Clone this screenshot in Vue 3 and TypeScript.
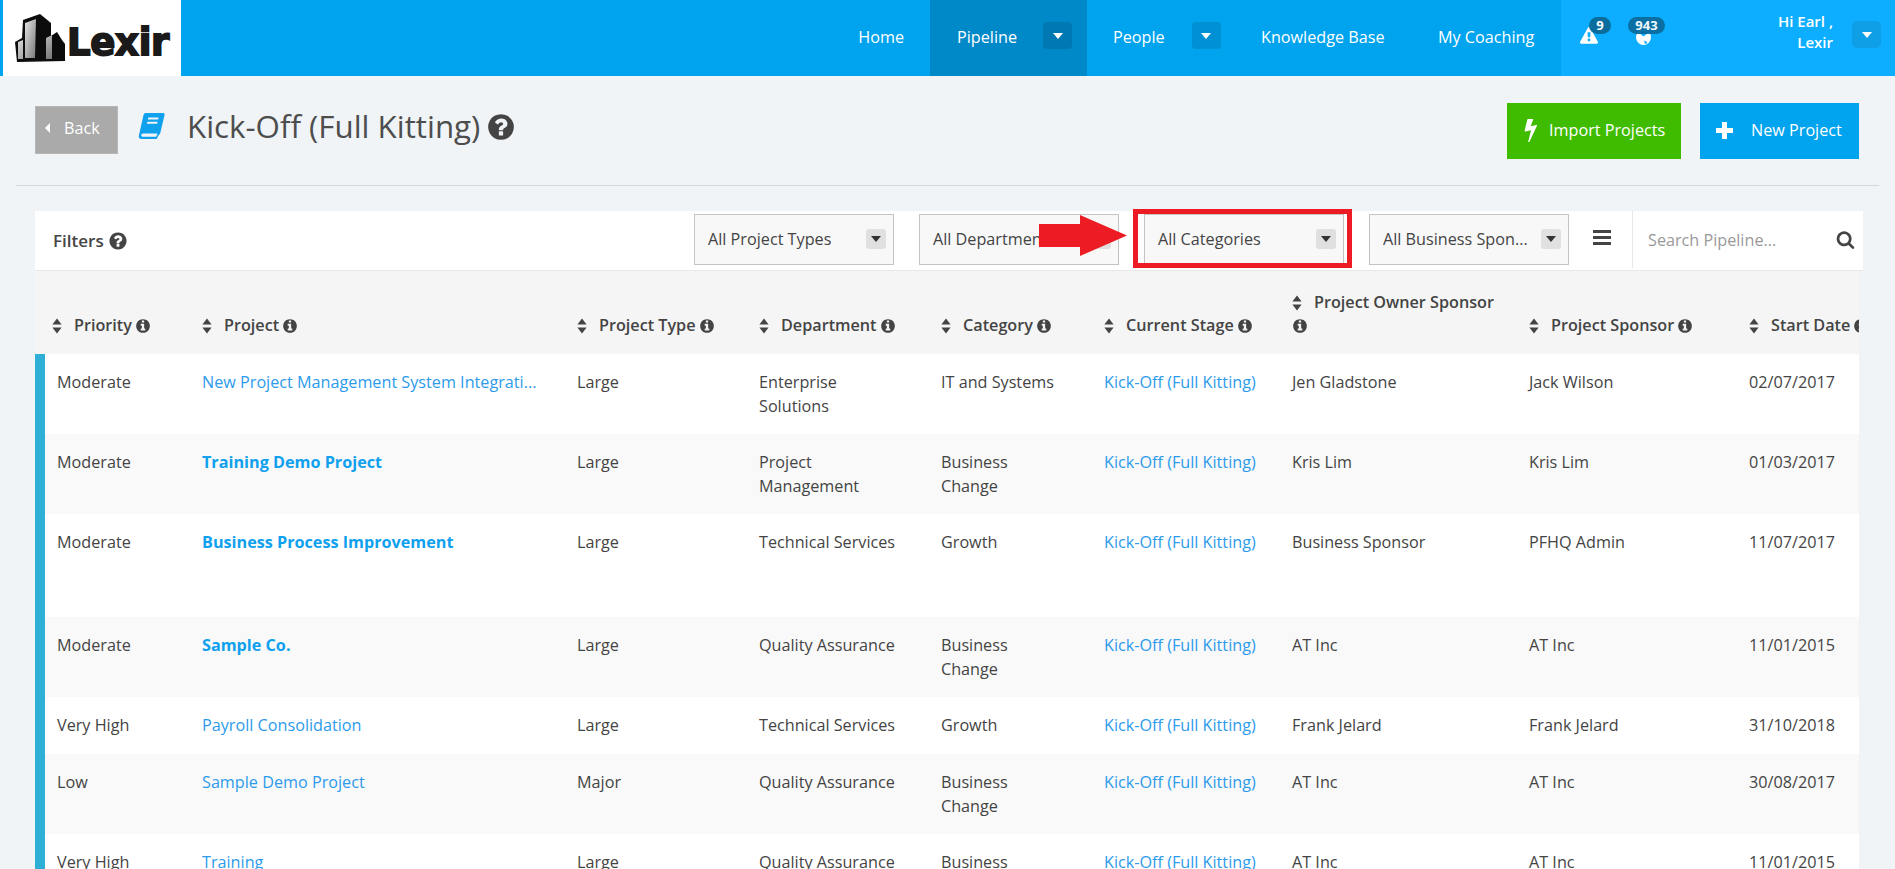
<script setup lang="ts">
interface Row {
  priority: string
  project: string
  bold?: boolean
  type: string
  dept: string
  category: string
  owner: string
  sponsor: string
  date: string
  size: 'tall' | 'short' | 'xtall'
}

const navLinks = [
  { label: 'Home', cls: 'home' },
  { label: 'Pipeline', cls: 'pipeline', caret: true },
  { label: 'People', cls: 'people', caret: true },
  { label: 'Knowledge Base', cls: 'kb' },
  { label: 'My Coaching', cls: 'coach' },
]

const selects = [
  { label: 'All Project Types', cls: 's1' },
  { label: 'All Departments', cls: 's2' },
  { label: 'All Categories', cls: 's3' },
  { label: 'All Business Spon...', cls: 's4' },
]

const columns = [
  { label: 'Priority', w: 155 },
  { label: 'Project', w: 375 },
  { label: 'Project Type', w: 182 },
  { label: 'Department', w: 182 },
  { label: 'Category', w: 163 },
  { label: 'Current Stage', w: 188 },
  { label: 'Project Owner Sponsor', w: 237 },
  { label: 'Project Sponsor', w: 220 },
  { label: 'Start Date', w: 200 },
]

const rows: Row[] = [
  { priority: 'Moderate', project: 'New Project Management System Integrati...', type: 'Large', dept: 'Enterprise Solutions', category: 'IT and Systems', owner: 'Jen Gladstone', sponsor: 'Jack Wilson', date: '02/07/2017', size: 'tall' },
  { priority: 'Moderate', project: 'Training Demo Project', bold: true, type: 'Large', dept: 'Project Management', category: 'Business Change', owner: 'Kris Lim', sponsor: 'Kris Lim', date: '01/03/2017', size: 'tall' },
  { priority: 'Moderate', project: 'Business Process Improvement', bold: true, type: 'Large', dept: 'Technical Services', category: 'Growth', owner: 'Business Sponsor', sponsor: 'PFHQ Admin', date: '11/07/2017', size: 'xtall' },
  { priority: 'Moderate', project: 'Sample Co.', bold: true, type: 'Large', dept: 'Quality Assurance', category: 'Business Change', owner: 'AT Inc', sponsor: 'AT Inc', date: '11/01/2015', size: 'tall' },
  { priority: 'Very High', project: 'Payroll Consolidation', type: 'Large', dept: 'Technical Services', category: 'Growth', owner: 'Frank Jelard', sponsor: 'Frank Jelard', date: '31/10/2018', size: 'short' },
  { priority: 'Low', project: 'Sample Demo Project', type: 'Major', dept: 'Quality Assurance', category: 'Business Change', owner: 'AT Inc', sponsor: 'AT Inc', date: '30/08/2017', size: 'tall' },
  { priority: 'Very High', project: 'Training', type: 'Large', dept: 'Quality Assurance', category: 'Business Change', owner: 'AT Inc', sponsor: 'AT Inc', date: '11/01/2015', size: 'tall' },
]
</script>

<template>
  <div class="app">
    <svg class="sprite" aria-hidden="true">
      <symbol id="i-info" viewBox="0 0 1792 1792">
        <path d="M1152 1376v-160q0-14-9-23t-23-9h-96v-512q0-14-9-23t-23-9h-320q-14 0-23 9t-9 23v160q0 14 9 23t23 9h96v320h-96q-14 0-23 9t-9 23v160q0 14 9 23t23 9h448q14 0 23-9t9-23zm-128-896v-160q0-14-9-23t-23-9h-192q-14 0-23 9t-9 23v160q0 14 9 23t23 9h192q14 0 23-9t9-23zm640 416q0 209-103 385.5t-279.5 279.5-385.5 103-385.5-103-279.5-279.5-103-385.5 103-385.5 279.5-279.5 385.5-103 385.5 103 279.5 279.5 103 385.5z" />
      </symbol>
      <symbol id="i-question" viewBox="0 0 1792 1792">
        <path d="M1024 1376v-192q0-14-9-23t-23-9h-192q-14 0-23 9t-9 23v192q0 14 9 23t23 9h192q14 0 23-9t9-23zm256-672q0-88-55.5-163t-138.5-116-170-41q-243 0-371 213-15 24 8 42l132 100q7 6 19 6 16 0 25-12 53-68 86-92 34-24 86-24 48 0 85.5 26t37.5 59q0 38-20 61t-68 45q-63 28-115.5 86.5t-52.5 125.5v36q0 14 9 23t23 9h192q14 0 23-9t9-23q0-19 21.5-49.5t54.5-49.5q32-18 49-28.5t46-35 44.5-48 28-60.5 12.5-81zm384 192q0 209-103 385.5t-279.5 279.5-385.5 103-385.5-103-279.5-279.5-103-385.5 103-385.5 279.5-279.5 385.5-103 385.5 103 279.5 279.5 103 385.5z" />
      </symbol>
      <symbol id="i-sort" viewBox="0 0 10 16">
        <path d="M5 0.5 9.6 6.5H0.4zM5 15.5 0.4 9.5H9.6z" />
      </symbol>
      <symbol id="i-caret" viewBox="0 0 10 6">
        <path d="M0 0H10L5 6z" />
      </symbol>
      <symbol id="i-search" viewBox="0 0 1792 1792">
        <path d="M1216 832q0-185-131.5-316.5t-316.5-131.5-316.5 131.5-131.5 316.5 131.5 316.5 316.5 131.5 316.5-131.5 131.5-316.5zm512 832q0 52-38 90t-90 38q-54 0-90-38l-343-342q-179 124-399 124-143 0-273.5-55.5t-225-150-150-225-55.5-273.5 55.5-273.5 150-225 225-150 273.5-55.5 273.5 55.5 225 150 150 225 55.5 273.5q0 220-124 399l343 343q37 37 37 90z" />
      </symbol>
    </svg>

    <header class="nav">
      <div class="logo">
        <svg class="logo-mark" viewBox="0 0 50 48" width="50" height="48">
          <defs>
            <linearGradient id="facade" x1="0" y1="0" x2="1" y2="1">
              <stop offset="0" stop-color="#e4e4e4" />
              <stop offset="1" stop-color="#777" />
            </linearGradient>
          </defs>
          <path d="M8 6 25 0 36 9V22L42 18 47 26 50 30V47L2 48 0 28 7 24z" fill="#0c0c0c" />
          <path d="M10 9 21 5 20 44H10z" fill="url(#facade)" />
          <path d="M3 28 8 26V45H3zM31 24 37 21V45H31z" fill="url(#facade)" />
        </svg>
        <span class="logo-text">Lexir</span>
      </div>
      <nav class="menu">
        <div v-for="link in navLinks" :key="link.label" class="menu-item" :class="link.cls">
          <span class="menu-label">{{ link.label }}</span>
          <span v-if="link.caret" class="menu-caret">
            <svg width="10" height="6"><use href="#i-caret" fill="#fff" /></svg>
          </span>
        </div>
      </nav>
      <div class="account">
        <div class="alert warn">
          <svg width="18" height="18" viewBox="0 0 1792 1792"><path fill="#fff" d="M1024 1375v-190q0-14-9.500-23.500t-22.500-9.500h-192q-13 0-22.500 9.500t-9.500 23.500v190q0 14 9.500 23.500t22.500 9.500h192q13 0 22.500-9.500t9.500-23.500zm-2-374l18-459q0-12-10-19-13-11-24-11h-220q-11 0-24 11-10 7-10 21l17 457q0 10 10 16.500t24 6.500h185q14 0 23.500-6.500t10.500-16.500zm-14-934l768 1408q35 63-2 126-17 29-46.500 46t-63.500 17h-1536q-34 0-63.500-17t-46.500-46q-37-63-2-126l768-1408q17-31 47-49t65-18 65 18 47 49z" /></svg>
          <span class="badge">9</span>
        </div>
        <div class="alert globe">
          <svg width="15" height="15" viewBox="0 0 16 16"><circle cx="8" cy="8" r="8" fill="#fff" /><path d="M3 3 8 7 13 3 12 1H4zM9 11l3 2-1 2-2-1z" fill="#0daeff" /></svg>
          <span class="badge">943</span>
        </div>
        <div class="greeting">Hi Earl ,<br />Lexir</div>
        <span class="account-caret">
          <svg width="10" height="6"><use href="#i-caret" fill="#fff" /></svg>
        </span>
      </div>
    </header>

    <main class="page">
      <section class="title-row">
        <button class="back">
          <svg width="5" height="10" viewBox="0 0 5 10"><path d="M5 0V10L0 5z" fill="#fff" /></svg>
          <span>Back</span>
        </button>
        <svg class="book" width="30" height="28" viewBox="0 0 30 30">
          <path d="M8 1H27Q29 1 28.500 3L24 22Q23.500 24 22 25L20 29H4Q0 29 1 25L6 3Q6.500 1 8 1z" fill="#0fa0ee" />
          <path d="M3.500 24.500Q4 23 6 23H21L19.500 26.500H5Q3 26.500 3.500 24.500z" fill="#f0f4f7" />
          <path d="M11 6H22L21.500 8H10.500zM10 10.500H21L20.500 12.500H9.500z" fill="#f0f4f7" />
        </svg>
        <h1 class="title">Kick-Off (Full Kitting)</h1>
        <svg class="title-help" width="30" height="30"><use href="#i-question" fill="#444" /></svg>
        <div class="actions">
          <button class="action import">
            <svg width="15" height="24" viewBox="400 60 950 1720"><path fill="#fff" d="M1333 566q18 20 7 44l-540 1157q-13 25-42 25-4 0-14-2-17-5-25.500-19t-4.500-30l197-808-406 101q-4 1-12 1-18 0-31-11-18-15-13-39l201-825q4-14 16-23t28-9h328q19 0 32 12.500t13 29.500q0 8-5 18l-171 463 396-98q8-2 12-2 19 0 34 15z" /></svg>
            <span>Import Projects</span>
          </button>
          <button class="action new">
            <svg width="17" height="17" viewBox="0 0 17 17"><path fill="#fff" d="M6 0H11V6H17V11H11V17H6V11H0V6H6z" /></svg>
            <span>New Project</span>
          </button>
        </div>
      </section>

      <div class="rule"></div>

      <section class="filters">
        <div class="filters-label">
          <span>Filters</span>
          <svg width="20" height="20"><use href="#i-question" fill="#444" /></svg>
        </div>
        <div v-for="s in selects" :key="s.cls" class="select" :class="s.cls">
          <span class="select-text">{{ s.label }}</span>
          <span class="select-btn">
            <svg width="10" height="6"><use href="#i-caret" fill="#333" /></svg>
          </span>
        </div>
        <div class="bars"><i></i><i></i><i></i></div>
        <div class="search">
          <span class="placeholder">Search Pipeline...</span>
          <svg width="19" height="19"><use href="#i-search" fill="#444" /></svg>
        </div>
        <div class="highlight"></div>
        <svg class="arrow" width="88" height="41" viewBox="0 0 88 41">
          <path d="M0 9H41V0L88 20.500 41 41V32H0z" fill="#ed1c24" />
        </svg>
      </section>

      <section class="table-wrap">
        <table class="grid">
          <colgroup>
            <col v-for="c in columns" :key="c.label" :style="{ width: c.w + 'px' }" />
          </colgroup>
          <thead>
            <tr>
              <th v-for="c in columns" :key="c.label">
                <svg class="sort" width="10" height="16"><use href="#i-sort" fill="#444" /></svg>
                <span class="th-label">{{ c.label }}</span>
                <svg class="info" width="16" height="16"><use href="#i-info" fill="#444" /></svg>
              </th>
            </tr>
          </thead>
          <tbody>
            <tr v-for="r in rows" :key="r.project" :class="r.size">
              <td>{{ r.priority }}</td>
              <td><a class="link" :class="{ strong: r.bold }">{{ r.project }}</a></td>
              <td>{{ r.type }}</td>
              <td>{{ r.dept }}</td>
              <td>{{ r.category }}</td>
              <td><a class="link">Kick-Off (Full Kitting)</a></td>
              <td>{{ r.owner }}</td>
              <td>{{ r.sponsor }}</td>
              <td>{{ r.date }}</td>
            </tr>
          </tbody>
        </table>
      </section>
    </main>
  </div>
</template>

<style>
html, body {
  margin: 0;
  background: #f0f4f7;
  overflow: hidden;
}
</style>

<style scoped>
.app {
  width: 1895px;
  height: 869px;
  overflow: hidden;
  background: #f0f4f7;
  font-family: "Open Sans", "Liberation Sans", sans-serif;
  font-size: 16.2px;
  line-height: 24px;
  color: #444;
}
.sprite {
  position: absolute;
  width: 0;
  height: 0;
}
svg {
  display: block;
  flex: none;
}

/* nav */
.nav {
  display: flex;
  height: 76px;
  background: #00a3ee;
  padding-left: 3px;
  box-sizing: border-box;
  color: #fff;
}
.logo {
  width: 178px;
  flex: none;
  background: #fff;
  display: flex;
  align-items: center;
  padding-left: 12px;
  box-sizing: border-box;
  gap: 2px;
}
.logo-text {
  font-family: "DejaVu Sans", sans-serif;
  font-weight: 700;
  font-size: 37px;
  line-height: 40px;
  color: #1a1a1a;
  letter-spacing: -0.3px;
  -webkit-text-stroke: 1.8px #1a1a1a;
  margin-top: 10px;
}
.menu {
  flex: 1;
  display: flex;
  justify-content: flex-end;
}
.menu-item {
  display: flex;
  align-items: center;
  height: 76px;
  box-sizing: border-box;
}
.menu-label {
  margin-bottom: 3px;
}
.home { width: 149px; justify-content: flex-end; padding-right: 26px; }
.pipeline {
  width: 157px;
  background: #0089c9;
  padding-left: 27px;
  gap: 26px;
}
.people { width: 174px; padding-left: 26px; gap: 27px; }
.kb { width: 177px; padding-left: 0; }
.coach { width: 123px; padding-left: 0; }
.menu-caret {
  width: 29px;
  height: 27px;
  margin-bottom: 5px;
  border-radius: 4px;
  background: #0091d4;
  display: flex;
  align-items: center;
  justify-content: center;
}
.pipeline .menu-caret {
  background: #0079b3;
}
.account {
  width: 334px;
  flex: none;
  background: #0daeff;
  position: relative;
  display: flex;
  align-items: flex-start;
  box-sizing: border-box;
}
.alert {
  position: relative;
  flex: none;
}
.warn {
  margin: 27px 0 0 19px;
  width: 18px;
}
.globe {
  margin: 30px 0 0 38px;
  width: 15px;
}
.badge {
  position: absolute;
  top: -11px;
  height: 17px;
  border-radius: 9px;
  background: #0a6d9e;
  color: #fff;
  font-size: 13px;
  font-weight: 700;
  line-height: 17px;
  text-align: center;
}
.warn .badge {
  left: 9px;
  width: 22px;
  top: -10px;
}
.globe .badge {
  left: -8px;
  width: 37px;
  top: -13px;
  opacity: 0.94;
}
.greeting {
  margin: 11px 0 0 auto;
  width: 120px;
  text-align: right;
  font-weight: 600;
  font-size: 15px;
  line-height: 21px;
}
.account-caret {
  margin: 21px 14px 0 19px;
  width: 29px;
  height: 27px;
  border-radius: 5px;
  background: #0e9fe6;
  display: flex;
  align-items: center;
  justify-content: center;
}

/* title */
.title-row {
  display: flex;
  align-items: flex-start;
  height: 109px;
  padding: 27px 36px 0 35px;
  box-sizing: border-box;
  position: relative;
}
.back {
  width: 83px;
  height: 48px;
  margin-top: 3px;
  background: #aaa;
  border: 1px solid #b7b7b7;
  box-sizing: border-box;
  color: #fff;
  font: inherit;
  display: flex;
  align-items: center;
  gap: 14px;
  padding: 0 0 5px 9px;
}
.book {
  margin: 9px 0 0 19px;
}
.title {
  margin: -1px 0 0 20px;
  font-size: 31.3px;
  line-height: 48px;
  font-weight: 400;
  color: #4d4d4d;
}
.title-help {
  margin: 9px 0 0 6px;
}
.actions {
  margin-left: auto;
  display: flex;
  gap: 19px;
}
.action {
  height: 56px;
  border: 0;
  color: #fff;
  font: inherit;
  display: flex;
  align-items: center;
  padding: 0 0 2px;
}
.import {
  width: 174px;
  background: #3fbc00;
  padding-left: 16px;
  gap: 11px;
}
.new {
  width: 159px;
  background: #00a3ee;
  padding-left: 16px;
  gap: 18px;
}
.rule {
  height: 1px;
  margin: 0 16px;
  background: #cfd9e2;
}

/* filters */
.filters {
  position: relative;
  margin: 25px 32px 0 35px;
  height: 60px;
  background: #fff;
  border-bottom: 1px solid #e8e8e8;
  box-sizing: border-box;
  display: flex;
  align-items: center;
}
.filters-label {
  display: flex;
  align-items: center;
  gap: 4px;
  margin-left: 18px;
  font-weight: 600;
  font-size: 17px;
  width: 641px;
  flex: none;
}
.select {
  width: 200px;
  height: 51px;
  flex: none;
  background: #f8f8f8;
  border: 1px solid #c4c4c4;
  box-sizing: border-box;
  display: flex;
  align-items: center;
  justify-content: space-between;
  padding: 0 7px 0 13px;
  margin-top: -3px;
}
.s2, .s3 { margin-left: 25px; }
.s4 { margin-left: 25px; }
.select-text {
  white-space: nowrap;
  overflow: hidden;
}
.select-btn {
  width: 20px;
  height: 20px;
  flex: none;
  border-radius: 3px;
  background: #e0e0e0;
  display: flex;
  align-items: center;
  justify-content: center;
}
.bars {
  margin: -6px 0 0 24px;
  width: 18px;
  flex: none;
  display: flex;
  flex-direction: column;
  gap: 3px;
}
.bars i {
  display: block;
  height: 3px;
  background: #444;
}
.search {
  margin-left: 21px;
  border-left: 1px solid #e8e8e8;
  height: 57px;
  flex: 1;
  display: flex;
  align-items: center;
  justify-content: space-between;
  padding: 0 8px 0 15px;
  margin-top: -3px;
}
.placeholder {
  color: #999;
  margin-top: 2px;
}
.highlight {
  position: absolute;
  left: 1098px;
  top: -2px;
  width: 219px;
  height: 59px;
  border: 5px solid #ed1c24;
  box-sizing: border-box;
  pointer-events: none;
}
.arrow {
  position: absolute;
  left: 1004px;
  top: 4px;
}

/* table */
.table-wrap {
  margin: 0 36px 0 35px;
  overflow: hidden;
  background: #fff;
}
.grid {
  width: 1902px;
  table-layout: fixed;
  border-collapse: separate;
  border-spacing: 0;
}
th {
  height: 83px;
  box-sizing: border-box;
  background: #f5f5f5;
  vertical-align: bottom;
  text-align: left;
  padding: 0 12px 17px;
  font-weight: 600;
  line-height: 23px;
  white-space: normal;
}
th:first-child {
  padding-left: 17px;
}
.sort, .info {
  display: inline-block;
  vertical-align: -3px;
}
.th-label {
  margin: 0 3px 0 12px;
}
td {
  vertical-align: top;
  padding: 16px 31px 0 12px;
  box-sizing: border-box;
  background: #fff;
}
td:first-child {
  border-left: 10px solid #2eb0d6;
  padding-left: 12px;
}
tbody tr:nth-child(even) td {
  background: #f9f9f9;
}
tr.tall { height: 80px; }
tr.short { height: 57px; }
tr.xtall { height: 103px; }
.link {
  color: #2c9bec;
  white-space: nowrap;
}
.strong {
  color: #0fa0ee;
  font-weight: 700;
}
</style>
